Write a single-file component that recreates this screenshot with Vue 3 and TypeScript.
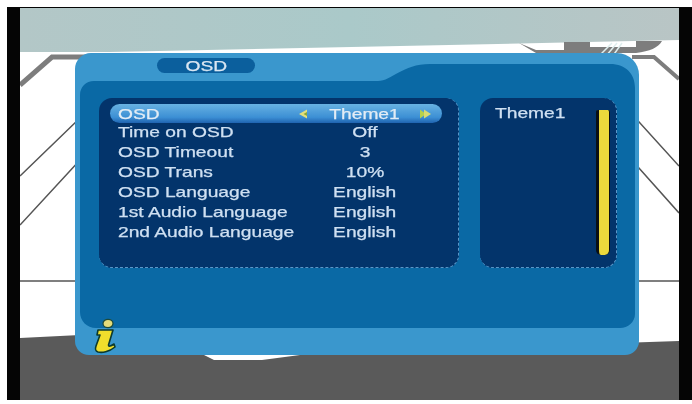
<script setup lang="ts">
interface Row { label: string; value: string }
const rows: Row[] = [
  { label: 'Time on OSD', value: 'Off' },
  { label: 'OSD Timeout', value: '3' },
  { label: 'OSD Trans', value: '10%' },
  { label: 'OSD Language', value: 'English' },
  { label: '1st Audio Language', value: 'English' },
  { label: '2nd Audio Language', value: 'English' },
]
</script>

<template>
  <div class="page">
    <div class="frame">
      <div class="video">
        <svg class="scene" width="659" height="392" viewBox="20 8 659 392">
          <defs>
            <linearGradient id="band" x1="0" x2="1" y1="0" y2="0">
              <stop offset="0" stop-color="#b3c7c7" />
              <stop offset="0.5" stop-color="#aac9c9" />
              <stop offset="1" stop-color="#b9c5c5" />
            </linearGradient>
          </defs>
          <rect x="20" y="8" width="659" height="392" fill="#fff" />
          <path d="M20 8H679V40L400 46 110 52H20Z" fill="url(#band)" />
          <path d="M20 85L52 57H100" fill="none" stroke="#7d7d7d" stroke-width="5" />
          <path d="M20 176L80 118M20 225L80 160M20 281H80M630 281H679M630 112L679 166M630 158L679 213" fill="none" stroke="#555" stroke-width="1.5" />
          <path d="M519 43L536 50H564V42H590V47H636V41H662C658 48 650 51 636 53H536Z" fill="#7d7d7d" />
          <path d="M632 57H654L679 79" fill="none" stroke="#7d7d7d" stroke-width="4" />
          <path d="M20 338L80 335V400H20ZM620 343L679 341V400H620Z" fill="#5a5a5a" />
          <path d="M75 345H679V400H75Z" fill="#5a5a5a" />
          <path d="M204 355H300L262 360H214Z" fill="#fff" />
          <path d="M612 43L600 55M617 43L606 56M622 43L612 57" stroke="#dfeeee" stroke-width="1.5" />
        </svg>

        <section class="panel">
          <svg class="panel-shape" width="555" height="264" viewBox="0 0 555 264">
            <path d="M14 17H298C312 17 322 0 350 0H530C546 0 555 10 555 24V250C555 258 548 264 540 264H16C7 264 0 257 0 248V31C0 23 6 17 14 17Z" fill="#0a69a5" />
          </svg>

          <header class="tab"><span class="wide">OSD</span></header>

          <div class="columns">
            <div class="well list">
              <div class="row selected">
                <span class="label">OSD</span>
                <span class="value">
                  <svg class="arrow left" width="10" height="10" viewBox="0 0 10 10">
                    <path d="M9 .5L1 5L9 9.5Z" fill="#e3e07e" />
                    <path d="M9 3V7L5.5 5Z" fill="#8aa838" />
                  </svg>
                  <span class="wide">Theme1</span>
                  <svg class="arrow right" width="11" height="10" viewBox="0 0 11 10">
                    <path d="M0 .5L6 5L0 9.5Z" fill="#b6d24a" />
                    <path d="M4 .5L11 5L4 9.5Z" fill="#d8dc70" />
                  </svg>
                </span>
              </div>
              <div v-for="row in rows" :key="row.label" class="row">
                <span class="label">{{ row.label }}</span>
                <span class="value"><span class="wide">{{ row.value }}</span></span>
              </div>
            </div>

            <aside class="well side">
              <span class="side-text">Theme1</span>
              <div class="scrollbar"></div>
            </aside>
          </div>

          <svg class="info" width="24" height="36" viewBox="0 0 24 36">
            <ellipse cx="15" cy="5.5" rx="5" ry="4.2" fill="#e4dc7a" stroke="#1d4a3a" stroke-width="1.2" />
            <path d="M5 12H20L15.5 27C15.5 29 18 28 21 26L22 29C16 34 9 35 5 34C2 33 2 31 3 28L7 17H4Z" fill="#f0de2c" stroke="#0c3a2e" stroke-width="1.6" stroke-linejoin="round" />
          </svg>
        </section>
      </div>
    </div>
  </div>
</template>

<style>
html, body { margin: 0; background: #fff; }
</style>

<style scoped>
.page {
  width: 692px;
  height: 404px;
  box-sizing: border-box;
  padding: 7px 0 4px 7px;
  background: #fff;
  overflow: hidden;
}
.frame {
  height: 100%;
  box-sizing: border-box;
  padding: 1px 13px 0;
  background: #050505;
}
.video {
  position: relative;
  height: 100%;
  box-sizing: border-box;
  padding: 45px 40px 0 55px;
  overflow: hidden;
}
.scene {
  position: absolute;
  left: 0;
  top: 0;
}
.panel {
  position: relative;
  width: 564px;
  height: 302px;
  box-sizing: border-box;
  padding: 5px 0 0 82px;
  background: #3a97cd;
  border-radius: 16px 22px 14px 14px;
  font-family: "Liberation Sans", Arial, sans-serif;
  color: #cfe0f2;
  -webkit-text-stroke: 0.25px currentColor;
  filter: blur(0.4px);
}
.panel-shape {
  position: absolute;
  left: 5px;
  top: 11px;
}
.wide {
  display: inline-block;
  transform: scaleX(1.28);
}
.tab {
  position: relative;
  width: 98px;
  height: 15px;
  border-radius: 8px;
  background: #0b5f9d;
  font-size: 15px;
  line-height: 15px;
  text-align: center;
  color: #d9e6f2;
}
.columns {
  position: relative;
  display: flex;
  gap: 21px;
  margin: 25px 0 0 -58px;
}
.well {
  box-sizing: border-box;
  height: 170px;
  background: #03346b;
  border-radius: 13px;
  border-right: 1px dashed #5c97c8;
  border-bottom: 1px dashed #5c97c8;
}
.list {
  width: 360px;
  padding: 6px 16px 0 11px;
}
.row {
  display: flex;
  align-items: center;
  height: 20px;
  padding-left: 8px;
  font-size: 15px;
  white-space: nowrap;
}
.row.selected {
  height: 19px;
  margin-bottom: -2px;
  border-radius: 10px;
  color: #e2ecf5;
  background: linear-gradient(#68b2e2, #3c8fd4 70%, #1f63b0);
}
.label {
  width: 184px;
  transform: scaleX(1.28);
  transform-origin: left center;
}
.value {
  flex: 1;
  display: flex;
  justify-content: center;
  align-items: center;
  position: relative;
  margin-right: 14px;
}
.arrow {
  position: absolute;
  top: 50%;
  margin-top: -5px;
}
.arrow.left {
  left: -4px;
}
.arrow.right {
  right: -3px;
}
.side {
  position: relative;
  width: 137px;
  padding: 5px 0 0 15px;
}
.side-text {
  display: inline-block;
  font-size: 15px;
  line-height: 20px;
  transform: scaleX(1.28);
  transform-origin: left center;
}
.scrollbar {
  position: absolute;
  left: 116px;
  top: 12px;
  width: 10px;
  height: 145px;
  border-left: 3px solid #0a0f14;
  border-right: 1px solid #0a0f14;
  border-radius: 2px 2px 5px 5px;
  background: #ecd93c;
}
.info {
  position: absolute;
  left: 18px;
  bottom: 1px;
}
</style>
